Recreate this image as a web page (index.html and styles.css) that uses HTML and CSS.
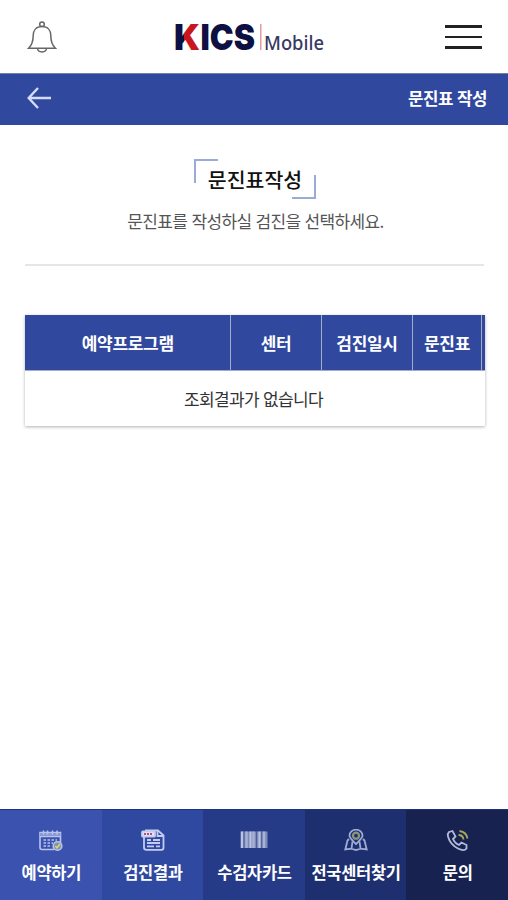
FILE: index.html
```html
<!DOCTYPE html>
<html lang="ko">
<head>
    <meta charset="UTF-8">
    <meta name="viewport" content="width=device-width, initial-scale=1.0">
    <title>문진표 작성</title>
    <link rel="stylesheet" href="styles.css">
</head>
<body>
    <header class="header">
        <a class="btn-alarm" href="javascript:;">
            <svg width="30" height="34" viewBox="0 0 30 34" fill="none" stroke="#666" stroke-width="1.5">
                <circle cx="15" cy="4.200" r="2.300"/>
                <path d="M15 6.500C9 6.500 6.200 10.500 6.200 15.500C6.200 21 5 25 1.600 28.300H28.400C25 25 23.800 21 23.800 15.500C23.800 10.500 21 6.500 15 6.500Z"/>
                <path d="M10.500 28.500C11 33 19 33 19.500 28.500"/>
            </svg>
        </a>
        <h1 class="logo">
            <svg width="156" height="52" viewBox="-2 -8 156 52">
                <defs>
                    <linearGradient id="logoK" gradientUnits="userSpaceOnUse" x1="1" y1="0" x2="27" y2="0">
                        <stop offset="0.290" stop-color="#0d1042"/>
                        <stop offset="0.290" stop-color="#c9151e"/>
                    </linearGradient>
                </defs>
                <text class="logo-kics" x="-1" y="32" textLength="26" lengthAdjust="spacingAndGlyphs" fill="url(#logoK)">K</text>
                <text class="logo-kics" x="25.500" y="32" textLength="54.500" lengthAdjust="spacingAndGlyphs" fill="#0d1042">ICS</text>
                <rect x="85" y="6" width="1.500" height="26" fill="#e59a9c"/>
                <text class="logo-mobile" x="89" y="32" textLength="60" lengthAdjust="spacingAndGlyphs">Mobile</text>
            </svg>
        </h1>
        <a class="btn-menu" href="javascript:;">
            <span></span>
            <span></span>
            <span></span>
        </a>
    </header>
    <div class="page-bar">
        <a class="btn-back" href="javascript:;">
            <svg width="26" height="24" viewBox="0 0 26 24" fill="none" stroke="#d5dcfa" stroke-width="2.400">
                <path d="M11 2L1.700 12L11 22M2.500 12H24"/>
            </svg>
        </a>
        <h2>문진표 작성</h2>
    </div>
    <main class="content">
        <section class="intro">
            <h3 class="intro-title">문진표작성</h3>
            <p>문진표를 작성하실 검진을 선택하세요.</p>
        </section>
        <table class="list">
            <thead>
                <tr>
                    <th class="col-program">예약프로그램</th>
                    <th class="col-center">센터</th>
                    <th class="col-date">검진일시</th>
                    <th class="col-paper">문진표</th>
                    <th></th>
                </tr>
            </thead>
            <tbody>
                <tr>
                    <td colspan="5">조회결과가 없습니다</td>
                </tr>
            </tbody>
        </table>
    </main>
    <nav class="tabs">
        <a class="tab tab1" href="javascript:;">
            <svg width="26" height="24" viewBox="0 0 26 24" fill="none" stroke="#b9c4ec" stroke-width="1.600">
                <path d="M16 20.500H4Q2 20.500 2 18.500V3.500H22.500V14M2 7.500H22.500" />
                <path d="M2 5.500H22.500" stroke="#8b99d2" stroke-width="3"/>
                <path d="M5.500 1.500V5.500M9.500 1.500V5.500M14.500 1.500V5.500M19 1.500V5.500"/>
                <path d="M5.500 11H19M5.500 14H15M5.500 17H13" stroke-dasharray="2.500 1.500"/>
                <circle cx="19.500" cy="17" r="4.300" fill="#8490b0"/>
                <path d="M17.300 17L19 18.800L22 15" stroke="#d8dc62"/>
            </svg>
            <span>예약하기</span>
        </a>
        <a class="tab tab2" href="javascript:;">
            <svg width="26" height="24" viewBox="0 0 26 24" fill="none" stroke="#c3ccef" stroke-width="1.800">
                <path d="M4 8V18.500Q4 20.800 6.500 20.800H21.500Q23.500 20.800 23.500 18.800V6.500L18 1.500H5"/>
                <path d="M17.500 1.500V7H23.500"/>
                <rect x="2" y="2.300" width="13" height="5.400" rx="1" fill="#e5dff2"/>
                <path d="M4 5H12" stroke="#ad527f" stroke-dasharray="2 1"/>
                <path d="M7 11H11M13 11H20M7 14H20M7 17.300H14M16 17.300H20"/>
            </svg>
            <span>검진결과</span>
        </a>
        <a class="tab tab3" href="javascript:;">
            <svg width="28" height="24" viewBox="0 0 28 24">
                <rect x="0.500" y="2.500" width="27" height="16.500" fill="#7e8bb9"/>
                <path d="M2 2.500V19M10.500 2.500V19M19.500 2.500V19" stroke="#bac4e2" stroke-width="2"/>
                <path d="M6.500 2.500V19M13.500 2.500V19M24 2.500V19" stroke="#a6b1d5" stroke-width="2.500"/>
                <path d="M4 2.500V19M16.500 2.500V19M21.700 2.500V19" stroke="#4d5e9a" stroke-width="1"/>
            </svg>
            <span>수검자카드</span>
        </a>
        <a class="tab tab4" href="javascript:;">
            <svg width="26" height="24" viewBox="0 0 26 24" fill="none" stroke="#9eabd5" stroke-width="1.800">
                <path d="M13 15C9 11 6.500 9 6.500 6.500A6.500 5.800 0 0 1 19.500 6.500C19.500 9 17 11 13 15Z"/>
                <circle cx="13" cy="6.700" r="3" stroke="#8d967c" stroke-width="2.300"/>
                <path d="M6 10L4.500 11.500L2.300 20.500L8.500 19.700L13 21L17.500 19.700L23.700 20.500L21.500 11.500L20 10M9.500 12.500L8.500 19.700M16.500 12.500L17.500 19.700"/>
            </svg>
            <span>전국센터찾기</span>
        </a>
        <a class="tab tab5" href="javascript:;">
            <svg width="26" height="24" viewBox="0 0 26 24" fill="none" stroke="#b1bad9" stroke-width="1.800">
                <path d="M4 3L7.500 2L10.500 7.500L8 10C9 12.500 11.500 15 14 16L16.500 13.500L21.500 16V19.500C20 21.500 16.500 21.300 13 19.500C8.500 17.200 4.500 13 3 7.500C2.500 5.500 3 4 4 3Z"/>
                <path d="M13.500 6Q18 6 18.500 10.500M14.500 2Q21.500 3 22.500 9.500" stroke="#a6a85b"/>
            </svg>
            <span>문의</span>
        </a>
    </nav>
</body>
</html>
```
FILE: styles.css
```css
*{
    margin: 0;
    padding: 0;
    box-sizing: border-box;
}
body{
    display: flex;
    flex-direction: column;
    height: 900px;
    overflow: hidden;
    background-color: #fff;
    font-family: "Noto Sans CJK KR", sans-serif;
    font-size: 17px;
    letter-spacing: -0.3px;
    color: #333;
}
a{
    color: inherit;
    text-decoration: none;
}
svg{
    display: block;
}

/* header */
.header{
    display: flex;
    justify-content: space-between;
    height: 73px;
    padding: 0 26px 0 27px;
}
.btn-alarm{
    padding-top: 20px;
}
.logo{
    padding: 10px 1px 0 0;
}
.logo-kics{
    font-family: Inter, sans-serif;
    font-size: 36px;
    font-weight: 900;
    letter-spacing: 0;
}
.logo-mobile{
    font-family: "Noto Sans", sans-serif;
    font-size: 19px;
    font-weight: 500;
    letter-spacing: 0;
    fill: #393963;
}
.btn-menu{
    display: flex;
    flex-direction: column;
    gap: 8px;
    width: 37px;
    padding-top: 25px;
}
.btn-menu span{
    height: 2.700px;
    background-color: #222;
}
.page-bar{
    display: flex;
    justify-content: space-between;
    align-items: center;
    height: 52px;
    padding: 0 21px 3px 27px;
    border-top: 1px solid #7780a0;
    background-color: #30499e;
    color: #fff;
}
.page-bar h2{
    font-size: 16.800px;
    font-weight: 700;
    line-height: 27px;
    letter-spacing: -0.5px;
}

/* content */
.content{
    flex: 1;
    padding: 34px 24px 0 25px;
}
.intro{
    height: 107px;
    border-bottom: 2px solid #e6e6e6;
    text-align: center;
}
.intro-title{
    position: relative;
    width: 122px;
    height: 40px;
    margin: 0 auto;
    padding-left: 1px;
    font-size: 20.500px;
    font-weight: 500;
    line-height: 41px;
    letter-spacing: 0;
    color: #111;
}
.intro-title::before,
.intro-title::after{
    content: "";
    position: absolute;
    width: 22px;
    height: 22px;
}
.intro-title::before{
    top: 0;
    left: 0;
    border-top: 2px solid #9aabd8;
    border-left: 2px solid #9aabd8;
}
.intro-title::after{
    right: 0;
    bottom: 0;
    border-right: 2px solid #9aabd8;
    border-bottom: 2px solid #9aabd8;
}
.intro p{
    padding: 10px 0 0 2px;
    line-height: 24px;
    letter-spacing: -0.65px;
    color: #555;
}
.list{
    width: 460px;
    margin-top: 49px;
    border-collapse: collapse;
    table-layout: fixed;
    box-shadow: 0 1px 3px rgba(0, 0, 0, 0.3);
}
.list th{
    height: 55px;
    padding-left: 1px;
    border-right: 1px solid #a3abc9;
    border-bottom: 1px solid #a3abc9;
    background-color: #30499e;
    color: #fff;
    font-weight: 700;
}
.list th:last-child{
    border-right: 0;
}
.list td{
    height: 56px;
    padding-right: 3px;
    letter-spacing: -0.65px;
    text-align: center;
}
.col-program{
    width: 205px;
}
.col-center,
.col-date{
    width: 91px;
}
.col-paper{
    width: 69px;
}

/* bottom tabs */
.tabs{
    display: grid;
    grid-template-columns: repeat(5, 1fr);
    height: 91px;
}
.tab{
    display: flex;
    flex-direction: column;
    align-items: center;
    padding: 19px 0 0 1px;
    border-top: 1px solid #1e3285;
    color: #fff;
    font-size: 16.500px;
    font-weight: 700;
    white-space: nowrap;
}
.tab span{
    margin-top: 7px;
    line-height: 24px;
}
.tab1{
    background-color: #3b53af;
}
.tab2{
    background-color: #3049a0;
}
.tab3{
    background-color: #263b87;
}
.tab4{
    background-color: #1e2f70;
}
.tab5{
    background-color: #172250;
}
```
